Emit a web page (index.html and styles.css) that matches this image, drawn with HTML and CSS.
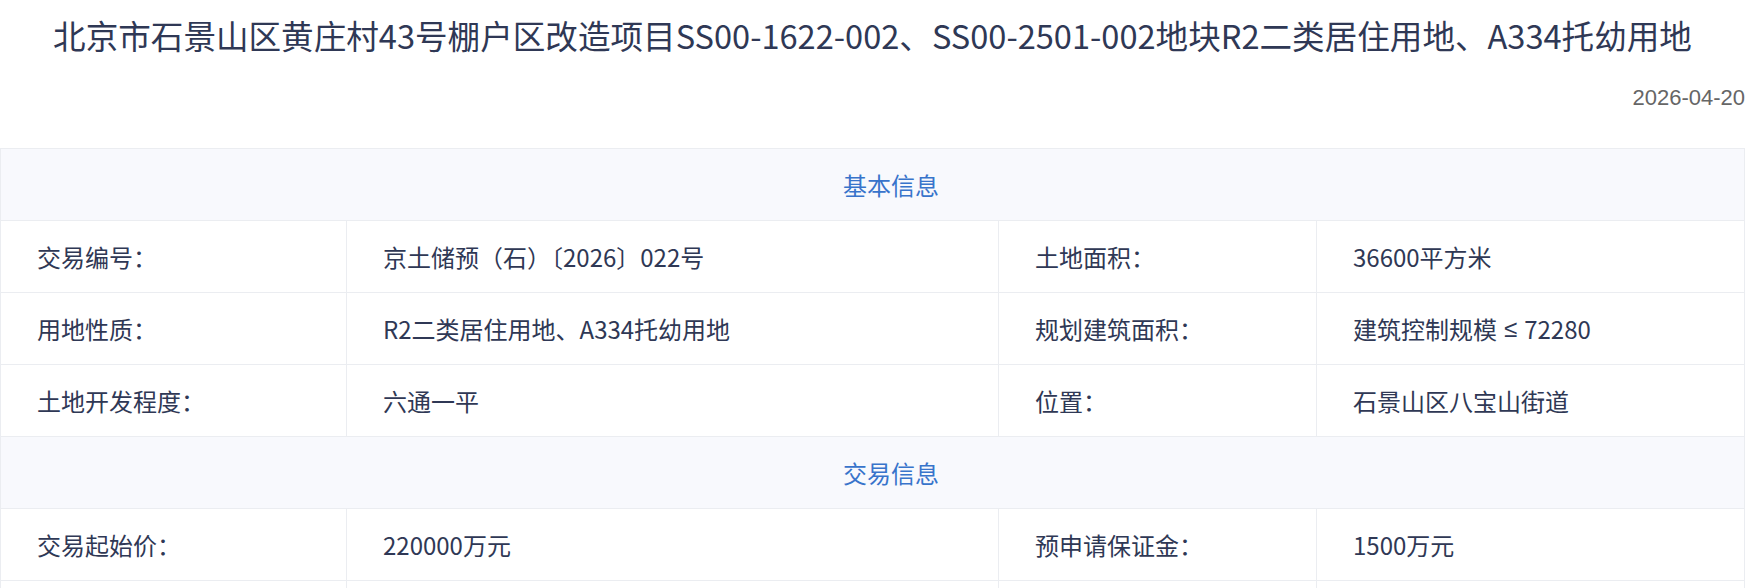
FILE: index.html
```html
<!DOCTYPE html>
<html lang="zh-CN">
<head>
<meta charset="utf-8">
<title>地块详情</title>
<link rel="stylesheet" href="styles.css">
</head>
<body>
<div class="page">
  <h1 class="title">北京市石景山区黄庄村43号棚户区改造项目SS00-1622-002、SS00-2501-002地块R2二类居住用地、A334托幼用地</h1>
  <div class="date">2026-04-20</div>
  <div class="table">
    <div class="section">基本信息</div>
    <div class="cell label">交易编号：</div>
    <div class="cell value">京土储预（石）〔2026〕022号</div>
    <div class="cell label">土地面积：</div>
    <div class="cell value">36600平方米</div>

    <div class="cell label">用地性质：</div>
    <div class="cell value">R2二类居住用地、A334托幼用地</div>
    <div class="cell label">规划建筑面积：</div>
    <div class="cell value">建筑控制规模<span class="sym">≤</span>72280</div>

    <div class="cell label">土地开发程度：</div>
    <div class="cell value">六通一平</div>
    <div class="cell label">位置：</div>
    <div class="cell value">石景山区八宝山街道</div>

    <div class="section">交易信息</div>
    <div class="cell label">交易起始价：</div>
    <div class="cell value">220000万元</div>
    <div class="cell label">预申请保证金：</div>
    <div class="cell value">1500万元</div>

    <div class="cell label"></div>
    <div class="cell value"></div>
    <div class="cell label"></div>
    <div class="cell value"></div>
  </div>
</div>
</body>
</html>
```
FILE: styles.css
```css
html, body {
  margin: 0;
  padding: 0;
  background: #ffffff;
}

body {
  font-family: "Noto Sans CJK SC", "Noto Sans", sans-serif;
  color: #2f3855;
}

.page {
  width: 1745px;
}

.title {
  margin: 0;
  padding-top: 13px;
  font-size: 32.6px;
  line-height: 44px;
  font-weight: 400;
  text-align: center;
  color: #2f3855;
}

.date {
  margin-top: 27px;
  text-align: right;
  font-family: "Liberation Sans", Arial, sans-serif;
  font-size: 22px;
  line-height: 28px;
  color: #666666;
}

.table {
  margin-top: 36px;
  display: grid;
  grid-template-columns: 346px 652px 318px 1fr;
  grid-auto-rows: 72px;
  border-top: 1px solid #ebedf1;
  border-left: 1px solid #ebedf1;
}

.section {
  grid-column: 1 / -1;
  display: flex;
  align-items: center;
  justify-content: center;
  padding-left: 37px;
  background: #f8f9fd;
  color: #3874cb;
  font-size: 24px;
  border-right: 1px solid #ebedf1;
  border-bottom: 1px solid #ebedf1;
}

.cell {
  display: flex;
  align-items: center;
  padding-left: 36px;
  font-size: 24px;
  border-right: 1px solid #ebedf1;
  border-bottom: 1px solid #ebedf1;
  white-space: nowrap;
}

.sym {
  padding: 0 7px;
  font-family: "Liberation Sans", Arial, sans-serif;
}
```
